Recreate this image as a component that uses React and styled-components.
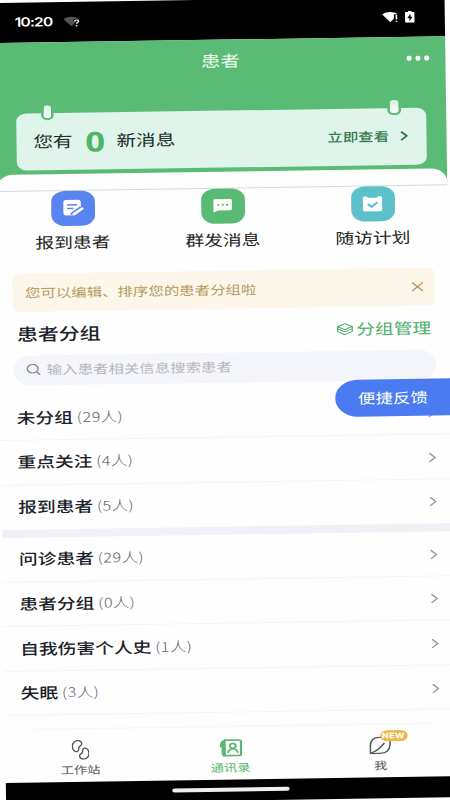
import React from "react";
import styled, { createGlobalStyle } from "styled-components";

const GlobalStyle = createGlobalStyle`
    * {
        box-sizing: border-box;
    }
    body {
        margin: 0;
        background: #fefefe;
        font-family: "Noto Sans CJK SC", "Noto Sans", sans-serif;
    }
`;

const Viewport = styled.div`
    width: 450px;
    height: 800px;
    overflow: hidden;
    background: #fefefe;
`;

// the phone is 360 wide, stretched and slightly tilted
const Phone = styled.div`
    width: 360px;
    height: 801px;
    display: flex;
    flex-direction: column;
    position: relative;
    transform-origin: 0 0;
    transform: matrix(1.25, -0.0187, 0.0145, 1, -5.5, 3);
`;

const StatusBar = styled.div`
    height: 40px;
    flex: none;
    display: flex;
    align-items: center;
    padding: 0 24.5px 1px 16px;
    background: #000;
    color: #fff;
`;

const Clock = styled.span`
    font-family: Inter, sans-serif;
    font-size: 12.5px;
    font-weight: 600;
    line-height: 16px;
    letter-spacing: -0.7px;
    width: 38.5px;
    padding-top: 1px;
`;

const StatusIcons = styled.div`
    margin-left: auto;
    display: flex;
    align-items: center;
    gap: 5px;
`;

const Header = styled.div`
    height: 146px;
    margin-bottom: -14.5px;
    flex: none;
    background: #5abc74;
`;

const NavBar = styled.div`
    height: 43px;
    display: grid;
    grid-template-columns: 60px 1fr 60px;
    align-items: center;
    color: #eefaf1;
`;

const NavTitle = styled.div`
    grid-column: 2;
    text-align: center;
    font-size: 15.5px;
    line-height: 22px;
    padding-bottom: 3px;
`;

const Dots = styled.div`
    display: flex;
    gap: 3.5px;
    justify-self: end;
    padding-right: 13.5px;

    i {
        width: 3.5px;
        height: 4.4px;
        border-radius: 50%;
        background: #fff;
    }
`;

const MessageCard = styled.div`
    position: relative;
    height: 57px;
    margin: 27.5px 16px 0;
    padding: 0 14px 0 13.5px;
    display: flex;
    align-items: center;
    border-radius: 8px;
    background: #dff4ea;
    font-size: 15.7px;
    line-height: 22px;
    color: #222a26;
`;

const Pin = styled.span`
    position: absolute;
    top: -9.5px;
    ${(props) => props.$side}: ${(props) => (props.$side === "left" ? "19.5px" : "20.5px")};
    width: 10.4px;
    height: 16.5px;
    border: 2px solid #5abc74;
    border-radius: 5px;
    background: linear-gradient(#d5f1df, #fff);
`;

const Count = styled.span`
    width: 35px;
    text-align: center;
    font-family: "Open Sans", sans-serif;
    font-size: 27.5px;
    font-weight: 700;
    line-height: 40px;
    color: #4fb567;
    padding: 1px 0 0 1px;
`;

const ViewNow = styled.span`
    display: flex;
    align-items: center;
    gap: 9px;
    margin-left: auto;
    font-size: 12.3px;
    font-weight: 500;
    color: #37794f;
    padding: 0 1px 1px 0;
`;

const Sheet = styled.div`
    flex: 1;
    min-height: 0;
    display: flex;
    flex-direction: column;
    border-radius: 13px 13px 0 0;
    background: #fefefe;
`;

const SheetEdge = styled.div`
    height: 17px;
    flex: none;
    border-bottom: 1px solid #d3dcd8;
`;

const Actions = styled.div`
    height: 82.5px;
    flex: none;
    display: grid;
    grid-template-columns: repeat(3, 1fr);
`;

const Action = styled.div`
    display: flex;
    flex-direction: column;
    align-items: center;
    font-size: 15px;
    line-height: 22px;
    gap: 5.5px;
    color: #222;
`;

const Tile = styled.div`
    width: 35px;
    height: 35px;
    display: flex;
    align-items: center;
    justify-content: center;
    border-radius: 11px;
    background: ${(props) => props.$color};
`;

const Notice = styled.div`
    height: 38px;
    flex: none;
    margin: 0 11px;
    padding: 0 9.5px 0 10px;
    display: flex;
    align-items: center;
    justify-content: space-between;
    border-radius: 6px;
    background: #fcf7ea;
    font-size: 12.35px;
    color: #b89a5e;
`;

const GroupHeader = styled.div`
    height: 44px;
    flex: none;
    display: flex;
    align-items: center;
    justify-content: space-between;
    padding: 0 14.5px 0 14px;
`;

const GroupTitle = styled.div`
    font-size: 16.8px;
    font-weight: 500;
    line-height: 24px;
    color: #1d1f2b;
`;

const Manage = styled.div`
    display: flex;
    align-items: center;
    gap: 2px;
    font-size: 15px;
    line-height: 22px;
    color: #4fae69;
`;

const Search = styled.div`
    height: 30px;
    flex: none;
    margin: 0 11px 10.5px;
    padding: 0 10px 2px;
    display: flex;
    align-items: center;
    gap: 4.5px;
    border-radius: 14px / 15px;
    background: #f5f6fb;
    font-size: 12.35px;
    color: #b5b6bc;
`;

const Row = styled.div`
    height: 44.6px;
    flex: none;
    display: flex;
    align-items: center;
    padding: 0 12.5px 1px 13px;
    border-bottom: 1px solid ${(props) => (props.$last ? "transparent" : "#f5f5f6")};

    svg {
        margin-top: 3px;
    }
`;

const RowName = styled.span`
    font-size: 15px;
    font-weight: 500;
    line-height: 22px;
    color: #1d1f2b;
`;

const RowCount = styled.span`
    flex: 1;
    margin-left: 3px;
    font-size: 13px;
    font-weight: 300;
    line-height: 22px;
    letter-spacing: 0.4px;
    color: #5f6169;
`;

const Band = styled.div`
    height: 7.8px;
    flex: none;
    background: #eff1f7;
`;

const TabBar = styled.div`
    flex: 1;
    min-height: 0;
    margin: 13px 0 0;
    display: grid;
    grid-template-columns: repeat(3, 1fr);
    background: linear-gradient(#f7f7f8, #f7f7f8) 20px 0 / 324px 1.5px no-repeat;
`;

const Tab = styled.div`
    display: flex;
    flex-direction: column;
    align-items: center;
    padding-top: 12px;
    font-size: 10.6px;
    line-height: 16px;
    gap: 1.5px;
    color: ${(props) => (props.$active ? "#57b870" : "#55565a")};
`;

const TabIcon = styled.div`
    position: relative;
    height: 20px;
    display: flex;
    align-items: center;
`;

const NewBadge = styled.span`
    position: absolute;
    left: 8.5px;
    top: -5.5px;
    width: 22px;
    height: 11.5px;
    border-radius: 6px;
    background: #e9b94a;
    color: #fff;
    font-family: Inter, sans-serif;
    font-size: 7.4px;
    font-weight: 700;
    line-height: 12px;
    letter-spacing: 0.2px;
    text-align: center;
`;

const HomeBar = styled.div`
    height: 21.5px;
    flex: none;
    display: flex;
    justify-content: center;
    padding-top: 8px;
    background: #000;

    i {
        width: 94px;
        height: 4px;
        border-radius: 2px;
        background: #eeeeee;
    }
`;

const Feedback = styled.div`
    position: absolute;
    left: 268px;
    top: 382px;
    width: 95px;
    height: 36.5px;
    padding-left: 18px;
    border-radius: 18px 0 0 18px;
    background: #4a7bf0;
    color: #fff;
    font-size: 14px;
    line-height: 36px;
`;

const Chevron = ({ color = "#97979b", width = 1.2, size = 10 }) => (
    <svg width={size * 0.6} height={size} viewBox="0 0 6 10" fill="none" stroke={color} strokeWidth={width}>
        <path d="M.6.7 5.2 5 .6 9.3" />
    </svg>
);

const WifiUnknown = () => (
    <svg width="14" height="12" viewBox="0 0 14 12">
        <path d="M0 3.2C3.6.2 8.8.2 12.4 3.2L6.4 10.4Z" fill="#555" />
        <path d="M8.8 5.2c.1-1.2 3.2-1.4 3.2.3 0 1.2-1.6 1.2-1.6 2.7" fill="none" stroke="#000" strokeWidth="2.6" />
        <path d="M8.8 5.4c.1-1.4 3.2-1.6 3.2.1 0 1.2-1.6 1.2-1.6 2.5" fill="none" stroke="#fff" strokeWidth="1.1" />
        <circle cx="10.4" cy="9.9" r=".8" fill="#fff" />
    </svg>
);

const WifiAlert = () => (
    <svg width="13" height="12" viewBox="0 0 13 12">
        <path d="M0 3.2C3.6.2 8.8.2 12.4 3.2L6.4 11.2Z" fill="#fff" />
        <path d="M9.3 3.4h3.7V12H9.3z" fill="#000" />
        <path d="M10.7 4h1.2v4.6h-1.2zM10.7 9.8h1.2V11h-1.2z" fill="#fff" />
    </svg>
);

const Battery = () => (
    <svg width="8" height="12" viewBox="0 0 8 12">
        <path d="M2.6 0h2.8v1.2H7.2q.6 0 .6.7v9.3q0 .8-.6.8H.8q-.6 0-.6-.8V1.9q0-.7.6-.7h1.8z" fill="#fff" />
        <path d="M4.6 3 2 7.2h1.700V10.2L6.2 6H4.6z" fill="#000" />
    </svg>
);

const NoteIcon = () => (
    <svg width="18" height="18" viewBox="-.7 0 18 18">
        <path d="M3 1h9.5Q15 1 15 3.5V8l-6.5 8.5H3.5Q1 16.500 1 14V3Q1 1 3 1z" fill="#fff" />
        <path d="M4.500 6h7M4.500 9.600h4" stroke="#5884f1" strokeWidth="1.4" strokeLinecap="round" />
        <path d="M8 16.500 16 9.500" stroke="#5884f1" strokeWidth="5.200" />
        <path d="M9.300 15.400 15.900 9.900" stroke="#fff" strokeWidth="2.500" strokeLinecap="round" />
    </svg>
);

const ChatIcon = () => (
    <svg width="16" height="16" viewBox="0 0 17 17">
        <path d="M2 1.500h13q1.500 0 1.500 1.500v9q0 1.500-1.500 1.500H4.500L.8 16V3Q.8 1.500 2 1.500z" fill="#fff" />
        <g fill="#59bb73">
            <circle cx="5" cy="7.600" r="1" />
            <circle cx="8.700" cy="7.600" r="1" />
            <circle cx="12.400" cy="7.600" r="1" />
        </g>
    </svg>
);

const PlanIcon = () => (
    <svg width="16" height="17" viewBox="0 0 16 17">
        <path d="M1.600 1h1.700q.7 0 .9 1.400h7.600Q12 1 12.700 1h1.700q1.400 0 1.400 1.500v12q0 1.500-1.400 1.500H1.600Q.2 16 .2 14.500v-12Q.2 1 1.600 1z" fill="#fff" />
        <path d="M4.300 8.600 7.200 11.500 12 7" fill="none" stroke="#5cc0c8" strokeWidth="1.900" />
    </svg>
);

const LayersIcon = () => (
    <svg width="13" height="13" viewBox="0 0 13 13" fill="none" stroke="#4fae69" strokeWidth=".9" strokeLinejoin="round">
        <path d="M6.500.8 12.400 3.800 6.500 6.800.6 3.800z" />
        <path d="M.6 3.800v2.200l5.900 3 5.900-3V3.800M.6 6v2.600l5.900 3.300 5.900-3.300V6" />
    </svg>
);

const SearchIcon = () => (
    <svg width="12" height="12" viewBox="0 0 12 12" fill="none" stroke="#88898f" strokeWidth="1.200">
        <circle cx="5.300" cy="5.200" r="4.300" />
        <path d="M8.400 8.500 11.200 11.300" />
    </svg>
);

const CloseIcon = () => (
    <svg width="10" height="10" viewBox="0 0 10 10" stroke="#b89a5e" strokeWidth="1.200">
        <path d="M.7.7 9.300 9.300M9.300.7.7 9.300" />
    </svg>
);

const bean = "M5.500.8C8 .8 9.200 2.500 9 4.300 8.700 6 6.700 6.200 6.400 7.800 6.200 9.400 6.700 11.300 4.800 11.700 2.500 12 .8 9.500.7 6.500.6 3.300 2.500.8 5.500.8z";

const WorkIcon = () => (
    <svg width="14.5" height="20" viewBox="0 0 16 20" preserveAspectRatio="none" fill="none" stroke="#55565a" strokeWidth="1.250" strokeLinejoin="round">
        <path d={bean} />
        <path d={bean} transform="rotate(180 8 10)" />
    </svg>
);

const ContactIcon = () => (
    <svg width="19" height="19" viewBox="0 0 19 19" fill="none" stroke="#57b870" strokeWidth="1.700">
        <path d="M4.500 1.500H16q1.500 0 1.500 1.500v12.500Q17.500 17 16 17H4.500z" strokeLinejoin="round" />
        <path d="M4.500 2.200Q1.500 2.500 1.500 7.500h1.600v8q0 1.500 1.400 1.500" />
        <path d="M3.200 3v13" strokeWidth="2.400" />
        <circle cx="11" cy="7.200" r="2.400" strokeWidth="1.500" />
        <path d="M7 14.200Q7.800 10.300 11 10.200 14.200 10.300 15 14.200" strokeWidth="1.500" />
    </svg>
);

const LeafIcon = () => (
    <svg width="18" height="18" viewBox="0 0 18 18" fill="none" stroke="#55565a" strokeWidth="1.250" strokeLinejoin="round">
        <path d="M1 17V9Q1.500 1 8 1h8.800v7.500Q16 17 8.500 17z" />
        <path d="M1.300 16.700Q8 13.500 12.300 6.500" />
    </svg>
);

const actions = [
    { label: "报到患者", color: "#5884f1", icon: <NoteIcon /> },
    { label: "群发消息", color: "#59bb73", icon: <ChatIcon /> },
    { label: "随访计划", color: "#5cc0c8", icon: <PlanIcon /> },
];

const mainGroups = [
    { name: "未分组", count: 29 },
    { name: "重点关注", count: 4 },
    { name: "报到患者", count: 5 },
];

const customGroups = [
    { name: "问诊患者", count: 29 },
    { name: "患者分组", count: 0 },
    { name: "自我伤害个人史", count: 1 },
    { name: "失眠", count: 3 },
];

function GroupRow({ group, last }) {
    return (
        <Row $last={last}>
            <RowName>{group.name}</RowName>
            <RowCount>{`(${group.count}人)`}</RowCount>
            <Chevron />
        </Row>
    );
}

function App() {
    return (
        <Viewport>
            <GlobalStyle />
            <Phone>
                <StatusBar>
                    <Clock>10:20</Clock>
                    <WifiUnknown />
                    <StatusIcons>
                        <WifiAlert />
                        <Battery />
                    </StatusIcons>
                </StatusBar>

                <Header>
                    <NavBar>
                        <NavTitle>患者</NavTitle>
                        <Dots>
                            <i />
                            <i />
                            <i />
                        </Dots>
                    </NavBar>

                    <MessageCard>
                        <Pin $side="left" />
                        <Pin $side="right" />
                        <span>您有</span>
                        <Count>0</Count>
                        <span>新消息</span>
                        <ViewNow>
                            立即查看
                            <Chevron color="#37794f" width={1.7} size={10} />
                        </ViewNow>
                    </MessageCard>
                </Header>

                <Sheet>
                    <SheetEdge />
                    <Actions>
                        {actions.map((item) => (
                            <Action key={item.label}>
                                <Tile $color={item.color}>{item.icon}</Tile>
                                {item.label}
                            </Action>
                        ))}
                    </Actions>

                    <Notice>
                        您可以编辑、排序您的患者分组啦
                        <CloseIcon />
                    </Notice>

                    <GroupHeader>
                        <GroupTitle>患者分组</GroupTitle>
                        <Manage>
                            <LayersIcon />
                            分组管理
                        </Manage>
                    </GroupHeader>

                    <Search>
                        <SearchIcon />
                        输入患者相关信息搜索患者
                    </Search>

                    {mainGroups.map((group, i) => (
                        <GroupRow key={group.name} group={group} last={i === 2} />
                    ))}
                    <Band />
                    {customGroups.map((group) => (
                        <GroupRow key={group.name} group={group} />
                    ))}

                    <TabBar>
                        <Tab>
                            <TabIcon>
                                <WorkIcon />
                            </TabIcon>
                            工作站
                        </Tab>
                        <Tab $active>
                            <TabIcon>
                                <ContactIcon />
                            </TabIcon>
                            通讯录
                        </Tab>
                        <Tab>
                            <TabIcon>
                                <LeafIcon />
                                <NewBadge>NEW</NewBadge>
                            </TabIcon>
                            我
                        </Tab>
                    </TabBar>
                </Sheet>

                <HomeBar>
                    <i />
                </HomeBar>

                <Feedback>便捷反馈</Feedback>
            </Phone>
        </Viewport>
    );
}

export default App;
